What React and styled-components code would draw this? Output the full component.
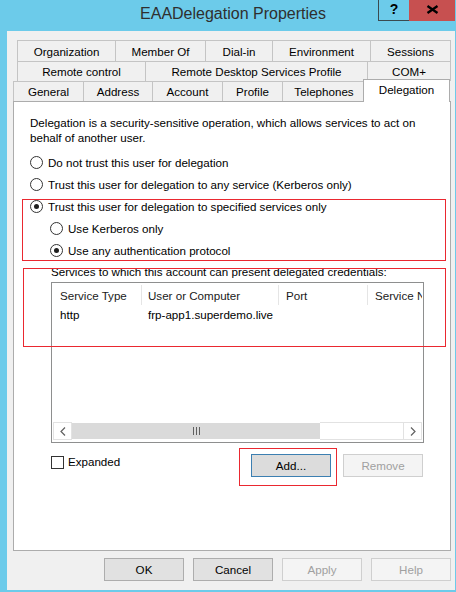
import React from "react";
import styled, { createGlobalStyle } from "styled-components";

const GlobalStyle = createGlobalStyle`
  html, body {
    margin: 0;
    padding: 0;
    background: #6ccbea;
  }
  body {
    font-family: "Liberation Sans", Arial, sans-serif;
    font-size: 11.6px;
    color: #000;
  }
`;

const tabRows = [
  {
    indent: 4,
    height: 21,
    tabs: [
      ["Organization", 99],
      ["Member Of", 91],
      ["Dial-in", 68],
      ["Environment", 99],
      ["Sessions", 81],
    ],
  },
  {
    indent: 4,
    height: 20,
    tabs: [
      ["Remote control", 129],
      ["Remote Desktop Services Profile", 223],
      ["COM+", 84],
    ],
  },
  {
    indent: 0,
    height: 20,
    tabs: [
      ["General", 71],
      ["Address", 70],
      ["Account", 71],
      ["Profile", 61],
      ["Telephones", 84],
      ["Delegation", 87, true],
    ],
  },
];

const columns = [
  ["Service Type", 89, 7],
  ["User or Computer", 137, 6],
  ["Port", 89, 7],
  ["Service Name", 100, 7],
];

const rows = [["http", "frp-app1.superdemo.live", "", ""]];

// red annotation boxes drawn over the panel
const highlights = [
  { left: 8, top: 97, width: 424, height: 62 },
  { left: 9, top: 166, width: 423, height: 79 },
  { left: 225, top: 346, width: 98, height: 38 },
];

const App = () => {
  return (
    <>
      <GlobalStyle />
      <Frame>
        <TitleBar>
          <Title>EAADelegation Properties</Title>
          <HelpButton>?</HelpButton>
          <CloseButton>
            <svg width="13" height="9" viewBox="0 0 13 9">
              <path d="M1.5 1 L11.5 8 M11.5 1 L1.5 8" stroke="#000" strokeWidth="2.3" />
            </svg>
          </CloseButton>
        </TitleBar>

        <Client>
          {tabRows.map((row, i) => (
            <TabRow key={i} indent={row.indent} height={row.height}>
              {row.tabs.map(([label, width, selected]) => (
                <Tab key={label} width={width} selected={selected}>
                  {label}
                </Tab>
              ))}
            </TabRow>
          ))}

          <Panel>
            <Description>
              Delegation is a security-sensitive operation, which allows services to act on behalf of another user.
            </Description>

            <RadioList>
              <RadioRow>
                <Radio />
                Do not trust this user for delegation
              </RadioRow>
              <RadioRow>
                <Radio />
                Trust this user for delegation to any service (Kerberos only)
              </RadioRow>
              <RadioRow>
                <Radio checked />
                Trust this user for delegation to specified services only
              </RadioRow>
              <RadioRow sub>
                <Radio />
                Use Kerberos only
              </RadioRow>
              <RadioRow sub>
                <Radio checked />
                Use any authentication protocol
              </RadioRow>
            </RadioList>

            <ServicesLabel>Services to which this account can present delegated credentials:</ServicesLabel>

            <ListView>
              <HeaderRow>
                {columns.map(([label, width, pad]) => (
                  <HeaderCell key={label} width={width} pad={pad}>
                    {label}
                  </HeaderCell>
                ))}
              </HeaderRow>
              <ListBody>
                {rows.map((r, i) => (
                  <ItemRow key={i}>
                    {r.map((val, j) => (
                      <ItemCell key={j} width={columns[j][1]} pad={columns[j][2]}>
                        {val}
                      </ItemCell>
                    ))}
                  </ItemRow>
                ))}
              </ListBody>
              <HScroll>
                <ScrollArrow>
                  <svg width="6" height="9" viewBox="0 0 6 9">
                    <path d="M5 0.5 L1 4.5 L5 8.5" stroke="#606060" strokeWidth="1.2" fill="none" />
                  </svg>
                </ScrollArrow>
                <Thumb>
                  <Grip />
                  <Grip />
                  <Grip />
                </Thumb>
                <Track />
                <ScrollArrow>
                  <svg width="6" height="9" viewBox="0 0 6 9">
                    <path d="M1 0.5 L5 4.5 L1 8.5" stroke="#606060" strokeWidth="1.2" fill="none" />
                  </svg>
                </ScrollArrow>
              </HScroll>
            </ListView>

            <ListActions>
              <CheckRow>
                <CheckBox />
                Expanded
              </CheckRow>
              <ButtonGroup>
                <Button focused>Add...</Button>
                <Button disabled>Remove</Button>
              </ButtonGroup>
            </ListActions>

            {highlights.map((h, i) => (
              <Highlight key={i} style={h} />
            ))}
          </Panel>

          <DialogButtons>
            <Button>OK</Button>
            <Button>Cancel</Button>
            <Button disabled>Apply</Button>
            <Button disabled>Help</Button>
          </DialogButtons>
        </Client>
      </Frame>
    </>
  );
};

export default App;

const Frame = styled.div`
  width: 456px;
  height: 592px;
  box-sizing: border-box;
  background: #6ccbea;
  display: flex;
  flex-direction: column;
  overflow: hidden;
`;

const TitleBar = styled.div`
  height: 31px;
  display: flex;
  align-items: flex-start;
  flex-shrink: 0;
`;

const Title = styled.div`
  flex: 1;
  padding-left: 88px;
  padding-top: 5px;
  text-align: center;
  font-size: 16px;
  line-height: 18px;
  color: #2f2f2f;
`;

const HelpButton = styled.div`
  width: 31px;
  height: 21px;
  box-sizing: border-box;
  border-left: 1px solid #3a4a50;
  border-bottom: 1px solid #3a4a50;
  display: flex;
  align-items: center;
  justify-content: center;
  font-size: 14px;
  font-weight: bold;
  padding-bottom: 3px;
`;

const CloseButton = styled.div`
  width: 46px;
  height: 21px;
  margin-right: 1px;
  background: #c75050;
  display: flex;
  align-items: center;
  justify-content: center;
  padding-bottom: 2px;
  box-sizing: border-box;
`;

const Client = styled.div`
  flex: 1;
  margin: 0 1px 2px 7px;
  padding: 9px 4px 0 6px;
  background: #f0f0f0;
  display: flex;
  flex-direction: column;
`;

const TabRow = styled.div`
  display: flex;
  height: ${(p) => p.height}px;
  margin-left: ${(p) => p.indent}px;
  align-items: flex-end;
`;

const Tab = styled.div`
  position: relative;
  width: ${(p) => p.width}px;
  height: ${(p) => (p.selected ? "23px" : "100%")};
  margin-right: -1px;
  margin-left: ${(p) => (p.selected ? "-2px" : "0")};
  margin-bottom: ${(p) => (p.selected ? "-1px" : "0")};
  box-sizing: border-box;
  border: 1px solid ${(p) => (p.selected ? "#acacac" : "#c4c4c4")};
  border-bottom: none;
  background: ${(p) => (p.selected ? "#fff" : "#f0f0f0")};
  z-index: ${(p) => (p.selected ? 2 : 0)};
  display: flex;
  align-items: center;
  justify-content: center;
  padding-bottom: ${(p) => (p.selected ? "3px" : "0")};
  white-space: nowrap;
`;

const Panel = styled.div`
  position: relative;
  height: 450px;
  box-sizing: border-box;
  border: 1px solid #acacac;
  background: #fff;
  padding-left: 16px;
  display: flex;
  flex-direction: column;
  flex-shrink: 0;
`;

const Description = styled.div`
  margin-top: 13px;
  width: 405px;
  line-height: 15px;
`;

const RadioList = styled.div`
  margin-top: 6px;
  display: flex;
  flex-direction: column;
`;

const RadioRow = styled.div`
  height: 22px;
  display: flex;
  align-items: center;
  padding-left: ${(p) => (p.sub ? "20px" : "0")};
  white-space: nowrap;
`;

const Radio = styled.span`
  width: 13px;
  height: 13px;
  box-sizing: border-box;
  border: 1px solid #333;
  border-radius: 50%;
  background: #fff;
  margin-right: 5px;
  display: flex;
  align-items: center;
  justify-content: center;
  flex-shrink: 0;
  &::after {
    content: "";
    width: 5px;
    height: 5px;
    border-radius: 50%;
    background: #1e1e1e;
    display: ${(p) => (p.checked ? "block" : "none")};
  }
`;

const ServicesLabel = styled.div`
  margin: 3px 0 0 21px;
  line-height: 15px;
  white-space: nowrap;
`;

const ListView = styled.div`
  margin: 3px 0 0 21px;
  width: 373px;
  height: 161px;
  box-sizing: border-box;
  border: 1px solid #8e8f8f;
  padding: 2px 1px;
  display: flex;
  flex-direction: column;
  overflow: hidden;
`;

const HeaderRow = styled.div`
  height: 20px;
  display: flex;
  flex-shrink: 0;
  overflow: hidden;
`;

const HeaderCell = styled.div`
  width: ${(p) => p.width}px;
  flex-shrink: 0;
  box-sizing: border-box;
  padding-left: ${(p) => p.pad}px;
  border-right: 1px solid #e5e5e5;
  display: flex;
  align-items: center;
  white-space: nowrap;
  color: #1a1a1a;
`;

const ListBody = styled.div`
  flex: 1;
  display: flex;
  flex-direction: column;
`;

const ItemRow = styled.div`
  height: 18px;
  display: flex;
  align-items: center;
  overflow: hidden;
`;

const ItemCell = styled.div`
  width: ${(p) => p.width}px;
  flex-shrink: 0;
  box-sizing: border-box;
  padding-left: ${(p) => p.pad}px;
  white-space: nowrap;
`;

const HScroll = styled.div`
  height: 18px;
  display: flex;
  flex-shrink: 0;
`;

const ScrollArrow = styled.div`
  width: 19px;
  box-sizing: border-box;
  border: 1px solid #e2e2e2;
  background: #fff;
  display: flex;
  align-items: center;
  justify-content: center;
  flex-shrink: 0;
`;

const Thumb = styled.div`
  width: 248px;
  background: #dadada;
  border-top: 1px solid #fff;
  border-bottom: 1px solid #fff;
  display: flex;
  align-items: center;
  justify-content: center;
  gap: 2px;
  flex-shrink: 0;
`;

const Grip = styled.span`
  width: 1px;
  height: 8px;
  background: #606060;
`;

const Track = styled.div`
  flex: 1;
  background: #fff;
  border-top: 1px solid #e2e2e2;
  border-bottom: 1px solid #e2e2e2;
`;

const ListActions = styled.div`
  margin: 11px 0 0 21px;
  width: 372px;
  display: flex;
  justify-content: space-between;
  align-items: flex-start;
`;

const CheckRow = styled.div`
  display: flex;
  align-items: center;
  margin-top: 1px;
  line-height: 14px;
`;

const CheckBox = styled.span`
  width: 13px;
  height: 13px;
  box-sizing: border-box;
  border: 1px solid #333;
  background: #fff;
  margin-right: 4px;
`;

const ButtonGroup = styled.div`
  display: flex;
  gap: 12px;
`;

const Button = styled.button`
  width: 80px;
  height: 23px;
  box-sizing: border-box;
  padding: 0;
  font-family: "Liberation Sans", Arial, sans-serif;
  font-size: 11.6px;
  color: ${(p) => (p.disabled ? "#a0a0a0" : "#000")};
  background: ${(p) => (p.disabled ? "#f4f4f4" : p.focused ? "#dcdcdc" : "#e1e1e1")};
  border: 1px solid
    ${(p) => (p.disabled ? "#cfcfcf" : p.focused ? "#3c7fb1" : "#adadad")};
  border-radius: 0;
`;

const Highlight = styled.div`
  position: absolute;
  box-sizing: border-box;
  border: 1px solid #ea2830;
  pointer-events: none;
`;

const DialogButtons = styled.div`
  margin-top: 7px;
  display: flex;
  justify-content: flex-end;
  gap: 9px;
`;
